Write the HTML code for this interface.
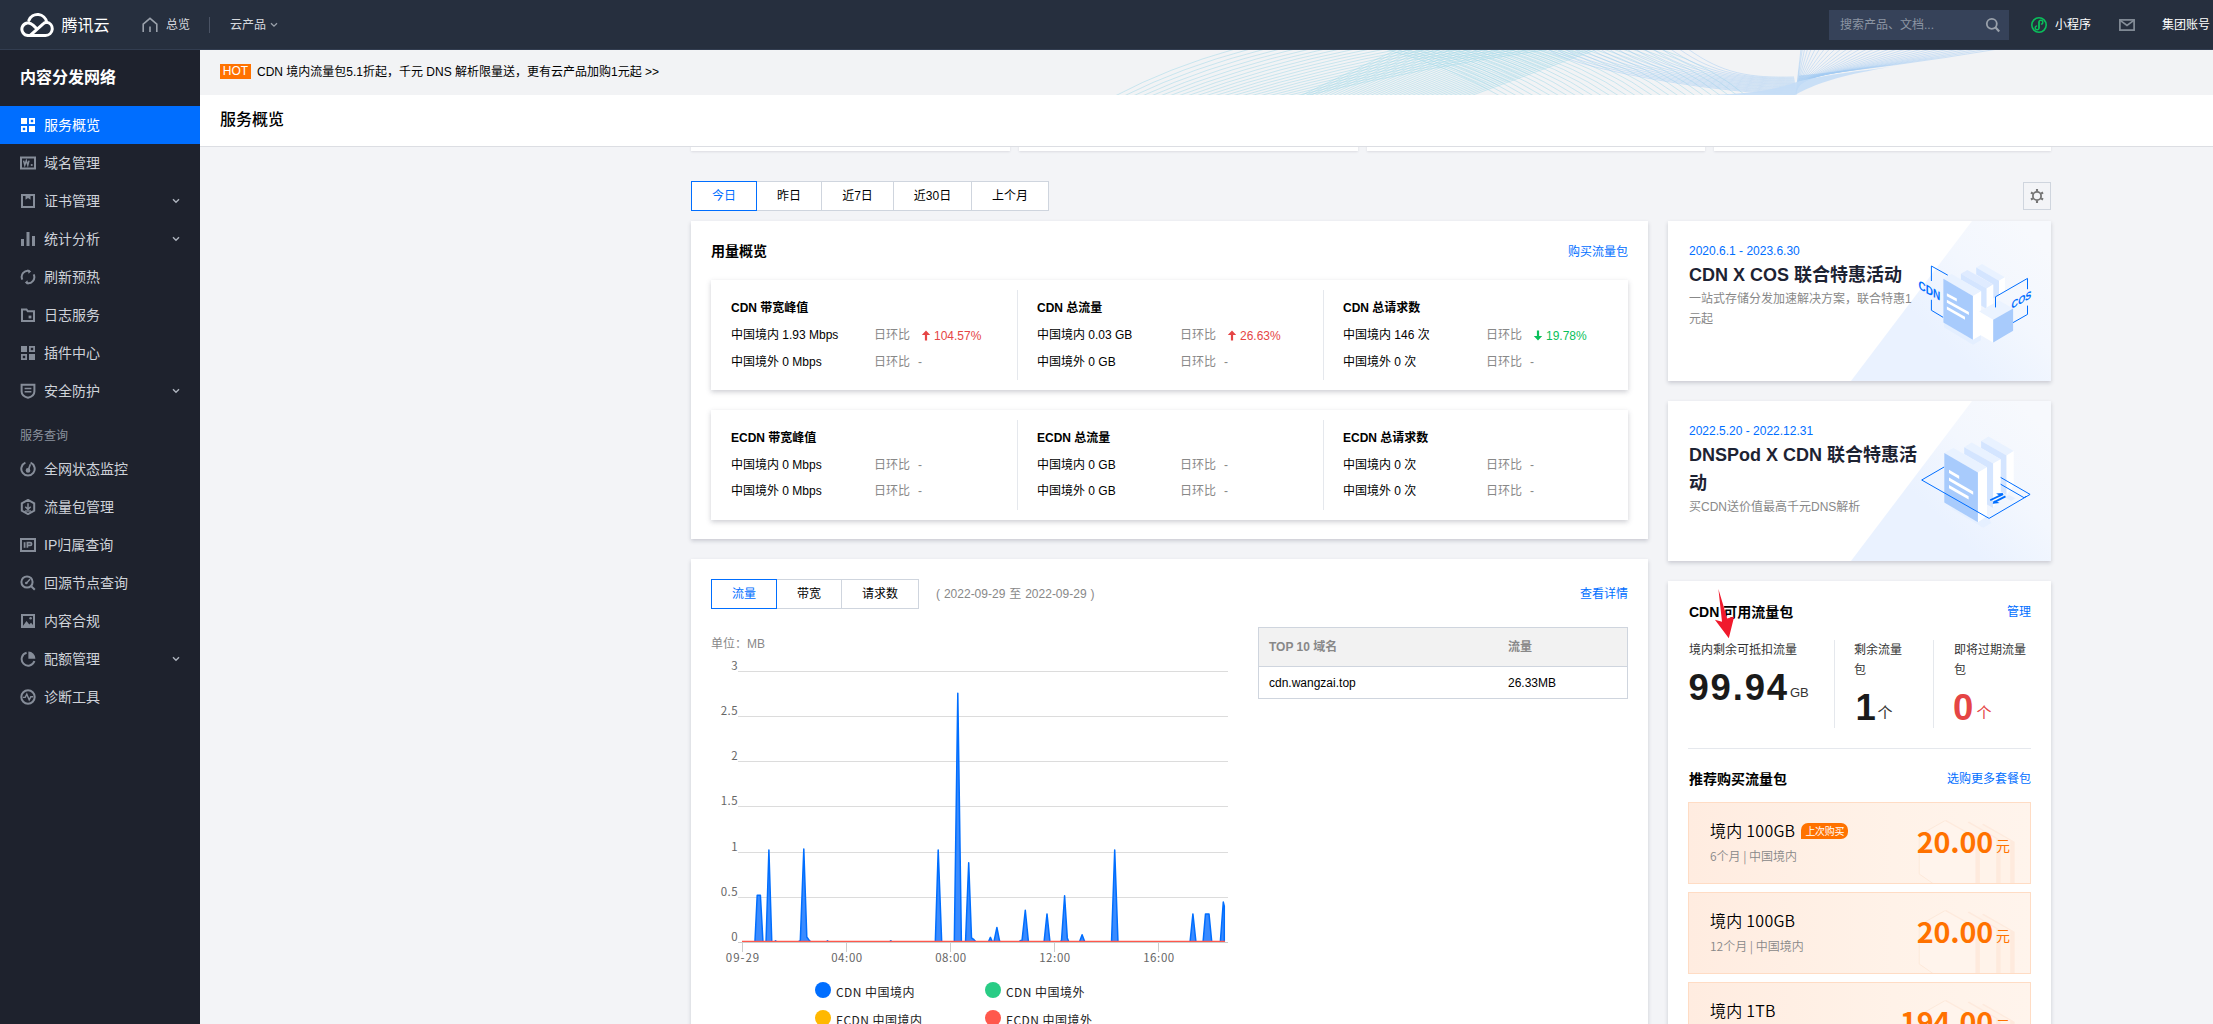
<!DOCTYPE html>
<html lang="zh-CN">
<head>
<meta charset="utf-8">
<title>内容分发网络 - 服务概览</title>
<style>
*{box-sizing:border-box;margin:0;padding:0}
html,body{width:2213px;height:1024px;overflow:hidden;background:#f3f4f7}
body{position:relative;font:12px/20px "Liberation Sans","Noto Sans CJK SC",sans-serif;color:#000}
.abs,.t{position:absolute}
.t{white-space:nowrap;line-height:20px;height:20px}
.b{font-weight:700}
.g{color:#888}
.blue{color:#006eff}
.ya{font-family:"Noto Sans CJK SC","Liberation Sans",sans-serif}
/* top bar */
#top{position:absolute;left:0;top:0;width:2213px;height:50px;background:#262f3e;border-bottom:1px solid #323d50}
#top .t{color:#d6d9de}
/* sidebar */
#side{position:absolute;left:0;top:50px;width:200px;height:974px;background:#1e222d}
#side .it{position:absolute;left:0;width:200px;height:38px;color:#cfd3da;font-size:14px;line-height:38px;padding-left:44px;white-space:nowrap}
#side .it.on{background:#006eff;color:#fff}
#side .it svg.ic{position:absolute;left:20px;top:11px;width:16px;height:16px}
#side .it svg.ch{position:absolute;left:172px;top:15px;width:8px;height:8px}
/* main */
#banner{position:absolute;left:200px;top:50px;width:2013px;height:45px;background:#f2f3f5;overflow:hidden}
#titlebar{z-index:4;position:absolute;left:200px;top:95px;width:2013px;height:52px;background:#fff;border-bottom:1px solid #dcdee3}
.card{position:absolute;background:#fff;box-shadow:0 2px 4px rgba(54,58,80,.22)}
.seg{position:absolute;height:30px;border:1px solid #cfd5de;background:#fff;text-align:center;line-height:28px;color:#000}
.seg.on{border-color:#006eff;color:#006eff;z-index:2}
.vd{position:absolute;width:1px;background:#e5e8ed}
</style>
</head>
<body>

<!-- ============ TOP BAR ============ -->
<div id="top">
  <svg class="abs" style="left:20px;top:12px" width="34" height="26" viewBox="0 0 34 26" fill="none" stroke="#fff" stroke-width="3" stroke-linecap="round" stroke-linejoin="round">
    <path d="M8.2 23.5h17.3a6.7 6.7 0 0 0 1.2-13.3A9.3 9.3 0 0 0 8.9 8.4"/>
    <path d="M8.2 23.5a6.3 6.3 0 1 1 4.6-10.6l3.1 2.9"/>
    <path d="M10.5 23.2L22.6 12.4a6 6 0 0 1 4.1-2.2"/>
  </svg>
  <div class="t ya" style="left:61.500px;top:13px;font-size:16px;line-height:22px;height:22px;color:#fff">腾讯云</div>
  <svg class="abs" style="left:142px;top:17px" width="16" height="16" viewBox="0 0 16 16" fill="none" stroke="#9aa1ab" stroke-width="1.6">
    <path d="M1.2 15V7.2L8 1.4l6.8 5.8V15"/><path d="M8 9.5V15"/>
  </svg>
  <div class="t" style="left:166px;top:15px">总览</div>
  <div class="abs" style="left:209px;top:17px;width:1px;height:16px;background:#4a5364"></div>
  <div class="t" style="left:230px;top:15px">云产品</div>
  <svg class="abs" style="left:270px;top:22px" width="8" height="6" viewBox="0 0 8 6" fill="none" stroke="#9aa1ab" stroke-width="1.3"><path d="M1 1.2l3 3 3-3"/></svg>

  <div class="abs" style="left:1829px;top:10px;width:180px;height:30px;background:#364259"></div>
  <div class="t" style="left:1840px;top:15px;color:#8c95a3">搜索产品、文档...</div>
  <svg class="abs" style="left:1985px;top:17px" width="16" height="16" viewBox="0 0 16 16" fill="none" stroke="#9aa1ab" stroke-width="1.8"><circle cx="6.8" cy="6.8" r="5"/><path d="M10.6 10.6l3.6 3.8" stroke-width="2.2"/></svg>
  <svg class="abs" style="left:2030px;top:16px" width="18" height="18" viewBox="0 0 18 18" fill="none" stroke="#0abf5b" stroke-width="1.6"><circle cx="9" cy="9" r="7.2"/><path d="M9 12.6V6.2a1.9 1.9 0 1 1 1.9 1.9" stroke-width="1.4"/><path d="M9 5.6v6.2a1.9 1.9 0 1 1-1.9-1.9" stroke-width="1.4"/></svg>
  <div class="t" style="left:2055px;top:15px;color:#fff">小程序</div>
  <svg class="abs" style="left:2119px;top:19px" width="16" height="12" viewBox="0 0 16 12" fill="none" stroke="#858e99" stroke-width="1.7"><rect x=".9" y=".9" width="14.2" height="10.2"/><path d="M1.200 1.400l6.800 5 6.800-5"/></svg>
  <div class="t" style="left:2162px;top:15px;color:#fff">集团账号</div>
</div>

<!-- ============ SIDEBAR ============ -->
<div id="side">
  <div class="t b ya" style="left:20px;top:14px;font-size:16px;line-height:24px;height:24px;color:#fff">内容分发网络</div>
  <div class="it on" style="top:56px"><svg class="ic" viewBox="0 0 16 16" fill="#fff" stroke="#fff" stroke-width="1.8"><rect x="1" y="1" width="6" height="6" stroke="none"/><rect x="9.9" y="1.9" width="4.2" height="4.2" fill="none"/><rect x="1.9" y="9.9" width="4.2" height="4.2" fill="none"/><rect x="9" y="9" width="6" height="6" stroke="none"/></svg>服务概览</div>
  <div class="it" style="top:94px"><svg class="ic" viewBox="0 0 16 16" fill="none" stroke="#868d99" stroke-width="2"><rect x="1" y="2.500" width="14" height="11"/><path d="M3.600 5.600l1.200 4.600 1.500-4.600 1.500 4.600L9 5.600" stroke-width="1.500"/><path d="M10.800 10h1.800" stroke-width="1.800"/></svg>域名管理</div>
  <div class="it" style="top:132px"><svg class="ic" viewBox="0 0 16 16" fill="none" stroke="#868d99" stroke-width="2"><rect x="2" y="2" width="12" height="12"/><path d="M5.500 2v4.800l2.500-1.700 2.500 1.700V2" fill="#868d99" stroke="none"/></svg>证书管理<svg class="ch" viewBox="0 0 8 8" fill="none" stroke="#aeb4be" stroke-width="1.4"><path d="M1 2.2l3 3 3-3"/></svg></div>
  <div class="it" style="top:170px"><svg class="ic" viewBox="0 0 16 16" fill="#868d99"><rect x="1" y="8" width="3" height="7"/><rect x="6.5" y="1" width="3" height="14"/><rect x="12" y="5" width="3" height="10"/></svg>统计分析<svg class="ch" viewBox="0 0 8 8" fill="none" stroke="#aeb4be" stroke-width="1.4"><path d="M1 2.2l3 3 3-3"/></svg></div>
  <div class="it" style="top:208px"><svg class="ic" viewBox="0 0 16 16" fill="none" stroke="#868d99" stroke-width="2"><path d="M2.3 10.6A6.2 6.2 0 0 1 9.6 2"/><path d="M13.7 5.4A6.2 6.2 0 0 1 6.4 14"/><path d="M7.6 0.6l3.6 1.6-2.6 2.6z" fill="#868d99" stroke="none"/><path d="M8.4 15.4l-3.6-1.6 2.6-2.6z" fill="#868d99" stroke="none"/></svg>刷新预热</div>
  <div class="it" style="top:246px"><svg class="ic" viewBox="0 0 16 16" fill="none" stroke="#868d99" stroke-width="2"><path d="M2 2.500h4.500l1.300 1.800h6.200v9.700H2z"/><rect x="8.6" y="8.6" width="2.8" height="2.8" fill="#868d99" stroke="none"/></svg>日志服务</div>
  <div class="it" style="top:284px"><svg class="ic" viewBox="0 0 16 16" fill="#868d99" stroke="#868d99" stroke-width="1.8"><rect x="1" y="1" width="6" height="6" stroke="none"/><rect x="9.9" y="1.9" width="4.2" height="4.2" fill="none"/><rect x="1.9" y="9.9" width="4.2" height="4.2" fill="none"/><rect x="9" y="9" width="6" height="6" stroke="none"/></svg>插件中心</div>
  <div class="it" style="top:322px"><svg class="ic" viewBox="0 0 16 16" fill="none" stroke="#868d99" stroke-width="2"><path d="M1.6 1.8h12.8v6.6c0 3.4-3 5.4-6.4 6.4-3.4-1-6.4-3-6.400-6.400z"/><path d="M4.600 5.600h6.800M4.600 8.800h6.800" stroke-width="1.5"/></svg>安全防护<svg class="ch" viewBox="0 0 8 8" fill="none" stroke="#aeb4be" stroke-width="1.4"><path d="M1 2.2l3 3 3-3"/></svg></div>
  <div class="it" style="top:400px"><svg class="ic" viewBox="0 0 16 16" fill="none" stroke="#868d99" stroke-width="2"><path d="M10.6 1.700A6.700 6.700 0 1 1 5.400 1.700"/><path d="M8 9.600L10.400 3.200" stroke-width="1.600"/><circle cx="8" cy="9.400" r="2.300" fill="#868d99" stroke="none"/></svg>全网状态监控</div>
  <div class="it" style="top:438px"><svg class="ic" viewBox="0 0 16 16" fill="none" stroke="#868d99" stroke-width="2"><path d="M8 .9l6.200 3.500v7.200L8 15.100 1.800 11.600V4.400z" stroke-dasharray="0"/><path d="M8 4.200v6M5.300 7.800L8 10.400l2.700-2.600" stroke-width="1.500"/><path d="M5 12h6" stroke-width="1.300"/></svg>流量包管理</div>
  <div class="it" style="top:476px"><svg class="ic" viewBox="0 0 16 16" fill="none" stroke="#868d99" stroke-width="2"><rect x="1" y="2" width="14" height="12"/><path d="M4.600 5.200v5.600" stroke-width="1.800"/><path d="M7.400 10.800V5.600h2.800a1.400 1.400 0 0 1 0 2.800H7.400" stroke-width="1.700"/></svg>IP归属查询</div>
  <div class="it" style="top:514px"><svg class="ic" viewBox="0 0 16 16" fill="none" stroke="#868d99" stroke-width="2"><circle cx="7" cy="7" r="5.600"/><path d="M11.200 11.200l3.600 3.600" stroke-width="2"/><path d="M6.500 8L10 4.200" stroke-width="1.500"/><circle cx="6.300" cy="8" r="1.300" fill="#868d99" stroke="none"/></svg>回源节点查询</div>
  <div class="it" style="top:552px"><svg class="ic" viewBox="0 0 16 16" fill="none" stroke="#868d99" stroke-width="2"><rect x="2" y="2" width="12" height="12"/><path d="M2.500 13.500l4-5.500 2.800 3.400 1.700-1.700 2.500 2.800v1z" fill="#868d99" stroke="none"/><circle cx="10.600" cy="5.200" r="1.300" fill="#868d99" stroke="none"/></svg>内容合规</div>
  <div class="it" style="top:590px"><svg class="ic" viewBox="0 0 16 16" fill="none" stroke="#868d99" stroke-width="2"><path d="M6.600 1.800A6.500 6.500 0 1 0 14.400 10"/><path d="M8.400 .6a7 7 0 0 1 7 7.200H8.400z" fill="#868d99" stroke="none"/></svg>配额管理<svg class="ch" viewBox="0 0 8 8" fill="none" stroke="#aeb4be" stroke-width="1.4"><path d="M1 2.2l3 3 3-3"/></svg></div>
  <div class="it" style="top:628px"><svg class="ic" viewBox="0 0 16 16" fill="none" stroke="#868d99" stroke-width="2"><circle cx="8" cy="8" r="6.700"/><path d="M2.800 8.400h2.400l1.600-3.200 2.400 5.600 1.600-3h2.400" stroke-width="1.400"/></svg>诊断工具</div>
  <div class="t" style="left:20px;top:376px;color:#8b929e">服务查询</div>
</div>

<!-- ============ BANNER + TITLE ============ -->
<div id="banner">
<svg class="abs" style="left:0;top:0" width="2013" height="45" viewBox="0 0 2013 45" fill="none"><path d="M915.0 46Q969.0 17.5 1035.0 -1M924.0 46Q981.0 17.5 1050.0 -1M933.0 46Q993.0 17.5 1065.0 -1M942.0 46Q1005.0 17.5 1080.0 -1M951.0 46Q1017.0 17.5 1095.0 -1M960.0 46Q1029.0 17.5 1110.0 -1M969.0 46Q1041.0 17.5 1125.0 -1M978.0 46Q1053.0 17.5 1140.0 -1M987.0 46Q1065.0 17.5 1155.0 -1M996.0 46Q1077.0 17.5 1170.0 -1M1005.0 46Q1089.0 17.5 1185.0 -1M1014.0 46Q1101.0 17.5 1200.0 -1M1023.0 46Q1113.0 17.5 1215.0 -1M1032.0 46Q1125.0 17.5 1230.0 -1M1041.0 46Q1137.0 17.5 1245.0 -1M1050.0 46Q1149.0 17.5 1260.0 -1M1059.0 46Q1161.0 17.5 1275.0 -1M1068.0 46Q1173.0 17.5 1290.0 -1M1077.0 46Q1185.0 17.5 1305.0 -1M1086.0 46Q1197.0 17.5 1320.0 -1M1095.0 46Q1209.0 17.5 1335.0 -1M1104.0 46Q1221.0 17.5 1350.0 -1M1100.0 46L1198.0 -1M1104.6 46L1203.4 -1M1109.2 46L1208.8 -1M1113.8 46L1214.2 -1M1118.4 46L1219.6 -1M1123.0 46L1225.0 -1M1127.6 46L1230.4 -1M1132.2 46L1235.8 -1M1136.8 46L1241.2 -1M1141.4 46L1246.6 -1M1146.0 46L1252.0 -1M1150.6 46L1257.4 -1M1155.2 46L1262.8 -1M1159.8 46L1268.2 -1M1164.4 46L1273.6 -1M1169.0 46L1279.0 -1M1173.6 46L1284.4 -1M1178.2 46L1289.8 -1M1182.8 46L1295.2 -1M1187.4 46L1300.6 -1M1192.0 46L1306.0 -1M1196.6 46L1311.4 -1M1201.2 46L1316.8 -1M1205.8 46L1322.2 -1M1210.4 46L1327.6 -1M1215.0 46L1333.0 -1M1219.6 46L1338.4 -1M1224.2 46L1343.8 -1M1228.8 46L1349.2 -1M1233.4 46L1354.6 -1M1238.0 46L1360.0 -1M1242.6 46L1365.4 -1M1247.2 46L1370.8 -1M1251.8 46L1376.2 -1M1256.4 46L1381.6 -1M1261.0 46L1387.0 -1M1265.6 46L1392.4 -1M1270.2 46L1397.8 -1M1185.0 -1Q1250.5 16.5 1300.0 46M1194.5 -1Q1259.5 16.5 1308.5 46M1204.0 -1Q1268.5 16.5 1317.0 46M1213.5 -1Q1277.5 16.5 1325.5 46M1223.0 -1Q1286.5 16.5 1334.0 46M1232.5 -1Q1295.5 16.5 1342.5 46M1242.0 -1Q1304.5 16.5 1351.0 46M1251.5 -1Q1313.5 16.5 1359.5 46M1261.0 -1Q1322.5 16.5 1368.0 46M1270.5 -1Q1331.5 16.5 1376.5 46M1280.0 -1Q1340.5 16.5 1385.0 46M1289.5 -1Q1349.5 16.5 1393.5 46M1299.0 -1Q1358.5 16.5 1402.0 46M1308.5 -1Q1367.5 16.5 1410.5 46M1318.0 -1Q1376.5 16.5 1419.0 46M1327.5 -1Q1385.5 16.5 1427.5 46M1337.0 -1Q1394.5 16.5 1436.0 46M1346.5 -1Q1403.5 16.5 1444.5 46M1356.0 -1Q1412.5 16.5 1453.0 46M1365.5 -1Q1421.5 16.5 1461.5 46M1375.0 -1Q1430.5 16.5 1470.0 46M1384.5 -1Q1439.5 16.5 1478.5 46M1394.0 -1Q1448.5 16.5 1487.0 46M1403.5 -1Q1457.5 16.5 1495.5 46M1413.0 -1Q1466.5 16.5 1504.0 46M1422.5 -1Q1475.5 16.5 1512.5 46M1432.0 -1Q1484.5 16.5 1521.0 46M1441.5 -1Q1493.5 16.5 1529.5 46M1451.0 -1Q1502.5 16.5 1538.0 46M1460.5 -1Q1511.5 16.5 1546.5 46" stroke="#a3d9e8" stroke-width=".6" opacity=".9"/><path d="M1348.0 -1C1373.0 20.0 1530.0 45.0 1597.0 44.0M1356.8 -1C1382.4 20.2 1531.2 43.9 1596.8 42.9M1365.5 -1C1391.8 20.5 1532.5 42.9 1596.6 41.9M1374.2 -1C1401.1 20.8 1533.8 41.8 1596.4 40.8M1383.0 -1C1410.5 21.0 1535.0 40.8 1596.2 39.8M1391.8 -1C1419.9 21.2 1536.2 39.7 1596.1 38.7M1400.5 -1C1429.2 21.5 1537.5 38.6 1595.9 37.6M1409.2 -1C1438.6 21.8 1538.8 37.6 1595.7 36.6M1418.0 -1C1448.0 22.0 1540.0 36.5 1595.5 35.5M1426.8 -1C1457.4 22.2 1541.2 35.4 1595.3 34.4M1435.5 -1C1466.8 22.5 1542.5 34.4 1595.1 33.4M1444.2 -1C1476.1 22.8 1543.8 33.3 1594.9 32.3M1453.0 -1C1485.5 23.0 1545.0 32.2 1594.8 31.2M1461.8 -1C1494.9 23.2 1546.2 31.2 1594.6 30.2M1470.5 -1C1504.2 23.5 1547.5 30.1 1594.4 29.1M1479.2 -1C1513.6 23.8 1548.8 29.1 1594.2 28.1M1488.0 -1C1523.0 24.0 1550.0 28.0 1594.0 27.0M1596.0 44.0Q1598.5 21.5 1601.0 -1M1596.1 43.4Q1598.8 21.4 1602.3 -1M1596.2 42.8Q1599.7 21.2 1604.6 -1M1596.3 42.1Q1600.9 21.1 1607.6 -1M1596.4 41.5Q1602.4 20.9 1611.1 -1M1596.5 40.9Q1604.1 20.8 1615.1 -1M1596.6 40.3Q1606.0 20.7 1619.5 -1M1596.7 39.7Q1608.1 20.5 1624.4 -1M1596.8 39.0Q1610.4 20.4 1629.5 -1M1596.9 38.4Q1612.9 20.3 1635.1 -1M1597.0 37.8Q1615.5 20.1 1640.9 -1M1597.1 37.2Q1618.3 20.0 1647.0 -1M1597.2 36.6Q1621.2 19.8 1653.4 -1M1597.3 35.9Q1624.3 19.7 1660.1 -1M1597.4 35.3Q1627.4 19.6 1667.1 -1M1597.6 34.7Q1630.7 19.4 1674.3 -1M1597.7 34.1Q1634.2 19.3 1681.7 -1M1597.8 33.4Q1637.7 19.2 1689.4 -1M1597.9 32.8Q1641.4 19.0 1697.3 -1M1598.0 32.2Q1645.2 18.9 1705.5 -1M1598.1 31.6Q1649.1 18.7 1713.8 -1M1598.2 31.0Q1653.0 18.6 1722.4 -1M1598.3 30.3Q1657.1 18.5 1731.2 -1M1598.4 29.7Q1661.3 18.3 1740.1 -1M1598.5 29.1Q1665.6 18.2 1749.3 -1M1598.6 28.5Q1670.0 18.1 1758.7 -1M1598.7 27.9Q1674.5 17.9 1768.2 -1M1598.8 27.2Q1679.1 17.8 1778.0 -1M1598.9 26.6Q1683.7 17.6 1787.9 -1M1599.0 26.0Q1688.5 17.5 1798.0 -1" stroke="#a3cbf2" stroke-width=".6" opacity=".8"/><path d="M1512 45C1550 44 1575 40 1600 31C1630 24 1660 21 1690 17C1650 24 1622 30 1595 45z" fill="#c4ddf6" opacity=".9"/></svg>
  <div class="abs" style="left:20px;top:14px;width:31px;height:15px;background:#ff7200;color:#fff;font-size:12px;line-height:15px;text-align:center">HOT</div>
  <div class="t" style="left:57px;top:12px;color:#000">CDN 境内流量包5.1折起，千元 DNS 解析限量送，更有云产品加购1元起 &gt;&gt;</div>
</div>
<div id="titlebar">
  <div class="t ya" style="left:20px;top:11px;font-size:16px;font-weight:500;line-height:24px;height:24px">服务概览</div>
</div>

<div class="card" style="left:691px;top:140px;width:319px;height:11px;box-shadow:0 1px 2px rgba(54,58,80,.12)"></div>
<div class="card" style="left:1019px;top:140px;width:339px;height:11px;box-shadow:0 1px 2px rgba(54,58,80,.12)"></div>
<div class="card" style="left:1367px;top:140px;width:338px;height:11px;box-shadow:0 1px 2px rgba(54,58,80,.12)"></div>
<div class="card" style="left:1714px;top:140px;width:337px;height:11px;box-shadow:0 1px 2px rgba(54,58,80,.12)"></div>
<div class="seg on" style="left:691px;top:181px;width:66px">今日</div>
<div class="seg" style="left:756px;top:181px;width:66px">昨日</div>
<div class="seg" style="left:821px;top:181px;width:73px">近7日</div>
<div class="seg" style="left:893px;top:181px;width:79px">近30日</div>
<div class="seg" style="left:971px;top:181px;width:78px">上个月</div>
<div class="seg" style="left:2023px;top:182px;width:28px;height:28px;background:transparent"></div>
<svg class="abs" style="left:2029px;top:188px;z-index:3" width="16" height="16" viewBox="0 0 16 16" fill="none" stroke="#757575"><circle cx="8" cy="8" r="4.100" stroke-width="1.800"/><path d="M8.00 3.40L8.00 1.00M11.98 5.70L14.06 4.50M11.98 10.30L14.06 11.50M8.00 12.60L8.00 15.00M4.02 10.30L1.94 11.50M4.02 5.70L1.94 4.50" stroke-width="2.100"/></svg>
<div class="card" style="left:691px;top:221px;width:957px;height:318px"></div>
<div class="t b" style="left:711px;top:241px;font-size:14px">用量概览</div>
<div class="t blue" style="right:585px;top:242px;">购买流量包</div>
<div class="card" style="left:711px;top:280px;width:917px;height:110px;box-shadow:0 2px 5px rgba(54,58,80,.25)"></div>
<div class="vd" style="left:1017px;top:290px;height:90px"></div>
<div class="vd" style="left:1323px;top:290px;height:90px"></div>
<div class="t b" style="left:731px;top:297.5px;">CDN 带宽峰值</div>
<div class="t " style="left:731px;top:325px;">中国境内 1.93 Mbps</div>
<div class="t " style="left:731px;top:351.5px;">中国境外 0 Mbps</div>
<div class="t g" style="left:874px;top:325px;">日环比</div>
<div class="t g" style="left:874px;top:351.5px;">日环比</div>
<div class="t " style="left:921px;top:325.7px;color:#e54545"><svg width="10" height="11" viewBox="0 0 10 11" style="vertical-align:-1px;margin-right:3px"><path d="M5 .5L.8 5h3.100v5.500h2.200V5h3.100z" fill="#e54545"/></svg>104.57%</div>
<div class="t g" style="left:918px;top:351.5px;">-</div>
<div class="t b" style="left:1037px;top:297.5px;">CDN 总流量</div>
<div class="t " style="left:1037px;top:325px;">中国境内 0.03 GB</div>
<div class="t " style="left:1037px;top:351.5px;">中国境外 0 GB</div>
<div class="t g" style="left:1180px;top:325px;">日环比</div>
<div class="t g" style="left:1180px;top:351.5px;">日环比</div>
<div class="t " style="left:1227px;top:325.7px;color:#e54545"><svg width="10" height="11" viewBox="0 0 10 11" style="vertical-align:-1px;margin-right:3px"><path d="M5 .5L.8 5h3.100v5.500h2.200V5h3.100z" fill="#e54545"/></svg>26.63%</div>
<div class="t g" style="left:1224px;top:351.5px;">-</div>
<div class="t b" style="left:1343px;top:297.5px;">CDN 总请求数</div>
<div class="t " style="left:1343px;top:325px;">中国境内 146 次</div>
<div class="t " style="left:1343px;top:351.5px;">中国境外 0 次</div>
<div class="t g" style="left:1486px;top:325px;">日环比</div>
<div class="t g" style="left:1486px;top:351.5px;">日环比</div>
<div class="t " style="left:1533px;top:325.7px;color:#0abf5b"><svg width="10" height="11" viewBox="0 0 10 11" style="vertical-align:-1px;margin-right:3px"><path d="M5 10.500L.8 6h3.100V.5h2.200V6h3.100z" fill="#0abf5b"/></svg>19.78%</div>
<div class="t g" style="left:1530px;top:351.5px;">-</div>
<div class="card" style="left:711px;top:410px;width:917px;height:110px;box-shadow:0 2px 5px rgba(54,58,80,.25)"></div>
<div class="vd" style="left:1017px;top:420px;height:90px"></div>
<div class="vd" style="left:1323px;top:420px;height:90px"></div>
<div class="t b" style="left:731px;top:427.5px;">ECDN 带宽峰值</div>
<div class="t " style="left:731px;top:455px;">中国境内 0 Mbps</div>
<div class="t " style="left:731px;top:481px;">中国境外 0 Mbps</div>
<div class="t g" style="left:874px;top:455px;">日环比</div>
<div class="t g" style="left:874px;top:481px;">日环比</div>
<div class="t g" style="left:918px;top:455px;">-</div>
<div class="t g" style="left:918px;top:481px;">-</div>
<div class="t b" style="left:1037px;top:427.5px;">ECDN 总流量</div>
<div class="t " style="left:1037px;top:455px;">中国境内 0 GB</div>
<div class="t " style="left:1037px;top:481px;">中国境外 0 GB</div>
<div class="t g" style="left:1180px;top:455px;">日环比</div>
<div class="t g" style="left:1180px;top:481px;">日环比</div>
<div class="t g" style="left:1224px;top:455px;">-</div>
<div class="t g" style="left:1224px;top:481px;">-</div>
<div class="t b" style="left:1343px;top:427.5px;">ECDN 总请求数</div>
<div class="t " style="left:1343px;top:455px;">中国境内 0 次</div>
<div class="t " style="left:1343px;top:481px;">中国境外 0 次</div>
<div class="t g" style="left:1486px;top:455px;">日环比</div>
<div class="t g" style="left:1486px;top:481px;">日环比</div>
<div class="t g" style="left:1530px;top:455px;">-</div>
<div class="t g" style="left:1530px;top:481px;">-</div>
<div class="card" style="left:691px;top:559px;width:957px;height:480px"></div>
<div class="seg on" style="left:711px;top:579px;width:66px">流量</div>
<div class="seg" style="left:776px;top:579px;width:66px">带宽</div>
<div class="seg" style="left:841px;top:579px;width:78px">请求数</div>
<div class="t g" style="left:936px;top:583.5px;word-spacing:.6px">( 2022-09-29 至 2022-09-29 )</div>
<div class="t blue" style="right:585px;top:583.5px;">查看详情</div>
<div class="t g" style="left:711px;top:634px;">单位：MB</div>
<div class="abs" style="left:1258px;top:627px;width:370px;height:72px;border:1px solid #cfd5de;background:#fff"></div>
<div class="abs" style="left:1259px;top:628px;width:368px;height:39px;background:#f2f2f2;border-bottom:1px solid #cfd5de"></div>
<div class="t b g" style="left:1269px;top:636.5px;">TOP 10 域名</div>
<div class="t b g" style="left:1508px;top:636.5px;">流量</div>
<div class="t " style="left:1269px;top:672.5px;">cdn.wangzai.top</div>
<div class="t " style="left:1508px;top:672.5px;">26.33MB</div>
<svg class="abs" style="left:700px;top:655px" width="560" height="369" viewBox="700 655 560 369" font-family="Noto Sans CJK SC, Liberation Sans, sans-serif">
<path d="M738 942.5H1228" stroke="#ccc" stroke-width="1"/>
<text x="738" y="941.0" text-anchor="end" font-size="11.500" fill="#666" letter-spacing=".4">0</text>
<path d="M738 897.5H1228" stroke="#dcdcdc" stroke-width="1"/>
<text x="738" y="896.0" text-anchor="end" font-size="11.500" fill="#666" letter-spacing=".4">0.5</text>
<path d="M738 852.5H1228" stroke="#dcdcdc" stroke-width="1"/>
<text x="738" y="851.0" text-anchor="end" font-size="11.500" fill="#666" letter-spacing=".4">1</text>
<path d="M738 806.5H1228" stroke="#dcdcdc" stroke-width="1"/>
<text x="738" y="805.0" text-anchor="end" font-size="11.500" fill="#666" letter-spacing=".4">1.5</text>
<path d="M738 761.5H1228" stroke="#dcdcdc" stroke-width="1"/>
<text x="738" y="760.0" text-anchor="end" font-size="11.500" fill="#666" letter-spacing=".4">2</text>
<path d="M738 716.5H1228" stroke="#dcdcdc" stroke-width="1"/>
<text x="738" y="715.0" text-anchor="end" font-size="11.500" fill="#666" letter-spacing=".4">2.5</text>
<path d="M738 671.5H1228" stroke="#dcdcdc" stroke-width="1"/>
<text x="738" y="670.0" text-anchor="end" font-size="11.500" fill="#666" letter-spacing=".4">3</text>
<path d="M742.5 942V952" stroke="#ccc" stroke-width="1"/>
<text x="743.0" y="961.600" text-anchor="middle" font-size="11.500" fill="#666" letter-spacing="0.95">09-29</text>
<path d="M846.5 942V952" stroke="#ccc" stroke-width="1"/>
<text x="847.0" y="961.600" text-anchor="middle" font-size="11.500" fill="#666" letter-spacing="0.6">04:00</text>
<path d="M950.5 942V952" stroke="#ccc" stroke-width="1"/>
<text x="951.0" y="961.600" text-anchor="middle" font-size="11.500" fill="#666" letter-spacing="0.6">08:00</text>
<path d="M1054.5 942V952" stroke="#ccc" stroke-width="1"/>
<text x="1055.0" y="961.600" text-anchor="middle" font-size="11.500" fill="#666" letter-spacing="0.6">12:00</text>
<path d="M1158.5 942V952" stroke="#ccc" stroke-width="1"/>
<text x="1159.0" y="961.600" text-anchor="middle" font-size="11.500" fill="#666" letter-spacing="0.6">16:00</text>
<clipPath id="cp"><rect x="738" y="660" width="492" height="281.800"/></clipPath>
<g clip-path="url(#cp)"><path d="M754.9 942.4 L757.2 895.3 L760.4 895.3 L763 942.4Z M766 942.4 L768.9 850.0 L771.8 942.4Z M774 942.4 L775.6 940.8 L777 942.4Z M797 942.4 L800.3 940.6 L803.8 849.1 L806.8 937.0 L809.5 940.6 L811 942.4Z M826 942.4 L827.5 940.8 L829 942.4Z M889 942.4 L890.8 940.8 L892.5 942.4Z M935.3 942.4 L938.2 850.0 L941.7 942.4Z M954.3 942.4 L957.8 693.2 L961.4 942.4Z M965.5 942.4 L968.7 862.7 L971.5 937.9 L974 939.7 L976.5 942.4Z M988.2 942.4 L990.4 937.4 L992.6 942.4Z M993.8 942.4 L996.9 927.5 L999.5 940.6 L1000.5 942.4Z M1018.5 942.4 L1020.5 940.6 L1022 940.6 L1025.3 910.2 L1028.5 942.4Z M1044 942.4 L1047 913.9 L1050 942.4Z M1059.5 942.4 L1061.5 940.6 L1064.6 895.7 L1067.3 937.9 L1069 942.4Z M1079.3 942.4 L1082.1 934.7 L1085 942.4Z M1111.5 942.4 L1114.7 850.0 L1118 942.4Z M1190 942.4 L1192.9 913.9 L1196 942.4Z M1203 942.4 L1205.5 913.9 L1209 913.9 L1211.8 942.4Z M1220.3 942.4 L1223.3 902.1 L1224.3 906.2 L1224.3 942.4Z " fill="#3a8bff"/><path d="M754.9 942.4 L757.2 895.3 L760.4 895.3 L763 942.4 M766 942.4 L768.9 850.0 L771.8 942.4 M774 942.4 L775.6 940.8 L777 942.4 M797 942.4 L800.3 940.6 L803.8 849.1 L806.8 937.0 L809.5 940.6 L811 942.4 M826 942.4 L827.5 940.8 L829 942.4 M889 942.4 L890.8 940.8 L892.5 942.4 M935.3 942.4 L938.2 850.0 L941.7 942.4 M954.3 942.4 L957.8 693.2 L961.4 942.4 M965.5 942.4 L968.7 862.7 L971.5 937.9 L974 939.7 L976.5 942.4 M988.2 942.4 L990.4 937.4 L992.6 942.4 M993.8 942.4 L996.9 927.5 L999.5 940.6 L1000.5 942.4 M1018.5 942.4 L1020.5 940.6 L1022 940.6 L1025.3 910.2 L1028.5 942.4 M1044 942.4 L1047 913.9 L1050 942.4 M1059.5 942.4 L1061.5 940.6 L1064.6 895.7 L1067.3 937.9 L1069 942.4 M1079.3 942.4 L1082.1 934.7 L1085 942.4 M1111.5 942.4 L1114.7 850.0 L1118 942.4 M1190 942.4 L1192.9 913.9 L1196 942.4 M1203 942.4 L1205.5 913.9 L1209 913.9 L1211.8 942.4 M1220.3 942.4 L1223.3 902.1 L1224.3 906.2 L1224.3 942.4 " fill="none" stroke="#006eff" stroke-width="1.500" stroke-linejoin="round"/></g>
<path d="M742 941.3H1225" stroke="#ff584c" stroke-width="1.200"/>
<circle cx="823" cy="990" r="8" fill="#006eff"/>
<text x="836" y="996.5" font-size="12" fill="#222" letter-spacing=".45">CDN 中国境内</text>
<circle cx="993" cy="990" r="8" fill="#29cc85"/>
<text x="1006" y="996.5" font-size="12" fill="#222" letter-spacing=".45">CDN 中国境外</text>
<circle cx="823" cy="1018" r="8" fill="#ffb800"/>
<text x="836" y="1024.5" font-size="12" fill="#222" letter-spacing=".45">ECDN 中国境内</text>
<circle cx="993" cy="1018" r="8" fill="#ff584c"/>
<text x="1006" y="1024.5" font-size="12" fill="#222" letter-spacing=".45">ECDN 中国境外</text>
</svg>

<div class="card" style="left:1668px;top:221px;width:383px;height:160px;overflow:hidden"><svg class="abs" style="left:0;top:0" width="383" height="160" viewBox="0 0 383 160"><defs><linearGradient id="pg221" x1="0" y1="1" x2="1" y2="0.2"><stop offset="0.4" stop-color="#eaf2ff"/><stop offset="0.7" stop-color="#f3f7fe"/><stop offset="1" stop-color="#f7f9fd"/></linearGradient></defs><path d="M304 0H383V160H183z" fill="url(#pg221)"/><path d="M275.9 106.3L304.9 123.7L312.9 119.2L312.9 112.8L304.9 118.8L275.9 101.6z" fill="#e4efff" /><path d="M308.2 46.5L314.0 43.0L336.9 56.3L331.0 59.8z" fill="#e9f2ff" /><path d="M308.2 46.5L331.0 59.8L331.0 74.1L325.2 77.6L325.2 63.5L308.2 53.6z" fill="#d4e5ff" /><path d="M331.0 59.8L336.9 56.3L336.9 70.6L331.0 74.1z" fill="#fff" /><path d="M292.9 52.8L299.4 48.9L325.2 63.5L318.7 67.4z" fill="#dfebff" /><path d="M292.9 52.8L318.7 67.4L318.7 88.1L313.1 84.6L313.1 70.3L292.9 58.8z" fill="#d4e5ff" /><path d="M318.7 67.4L325.2 63.5L325.2 82.9L318.7 88.1z" fill="#fff" /><path d="M275.4 57.7L283.6 53.0L313.1 70.3L304.9 75.0z" fill="#e9f2ff" /><path d="M304.9 75.0L313.1 70.3L313.1 113.9L304.9 118.8z" fill="#fff" /><path d="M275.4 57.7L304.9 75.0L304.9 118.8L275.4 101.6z" fill="#a8cbfc" /><path d="M278.9 72.3L288.8 77.6L288.8 80.5L278.9 75.3z" fill="#fff" /><path d="M278.9 78.8L300.9 91.1L300.9 94.0L278.9 81.7z" fill="#fff" /><path d="M278.9 85.6L297.0 95.8L297.0 98.7L278.9 88.5z" fill="#fff" /><path d="M311.1 90.5L331.0 79.4L345.1 87.6L325.2 98.7z" fill="#ebf3ff" /><path d="M311.1 90.5L325.2 98.7L325.2 121.5L311.1 113.3z" fill="#fff" /><path d="M325.2 98.7L345.1 87.6L345.1 109.8L325.2 121.5z" fill="#a8cbfc" /><path d="M279.8 54.2L263.4 45.0L263.4 60.0" fill="none" stroke="#006eff" stroke-width="1"/><path d="M263.4 78.8L263.4 89.3L275.1 96.3" fill="none" stroke="#006eff" stroke-width="1"/><path d="M327.5 86.4L327.5 75.8L359.5 57.4L359.5 68.2" fill="none" stroke="#006eff" stroke-width="1"/><path d="M359.5 84.6L359.5 93.4L345.1 101.6" fill="none" stroke="#006eff" stroke-width="1"/><text font-family="Liberation Sans,sans-serif" font-size="12.500" font-weight="700" fill="#006eff" transform="matrix(.8 .46 0 1 250.500 67.500)">CDN</text><text font-family="Liberation Sans,sans-serif" font-size="11.500" font-weight="700" fill="#006eff" transform="matrix(.8 -.46 -.12 1 343 88.300)">COS</text></svg><div class="abs blue" style="left:21px;top:20px;line-height:20px;white-space:nowrap">2020.6.1 - 2023.6.30</div><div class="abs b" style="left:21px;top:40px;width:232px;font-size:18px;line-height:28px;color:#1d2333;font-family:'Liberation Sans','Noto Sans CJK SC',sans-serif">CDN X COS 联合特惠活动</div></div>
<div class="abs g" style="left:1689px;top:289px;width:228px;line-height:20px">一站式存储分发加速解决方案，联合特惠1元起</div>
<div class="card" style="left:1668px;top:401px;width:383px;height:160px;overflow:hidden"><svg class="abs" style="left:0;top:0" width="383" height="160" viewBox="0 0 383 160"><defs><linearGradient id="pg401" x1="0" y1="1" x2="1" y2="0.2"><stop offset="0.4" stop-color="#eaf2ff"/><stop offset="0.7" stop-color="#f3f7fe"/><stop offset="1" stop-color="#f7f9fd"/></linearGradient></defs><path d="M304 0H383V160H183z" fill="url(#pg401)"/><path d="M283.6 108.1L315.2 126.8L323.4 122.1L319.0 115.1L309.9 121.2L283.6 106.0z" fill="#e6f0ff" /><path d="M313.1 40.1L320.5 35.6L345.7 50.1L338.6 54.4z" fill="#e9f2ff" /><path d="M313.1 40.1L338.6 54.4L338.6 94.0L332.6 90.5L332.6 58.3L313.1 47.1z" fill="#d4e5ff" /><path d="M338.6 54.4L345.7 50.1L345.7 84.6L338.6 94.0z" fill="#fff" /><path d="M253.7 79.0L276.3 65.9" fill="none" stroke="#006eff" stroke-width="1"/><path d="M328.1 73.8L362.1 93.4L321.1 117.4" fill="none" stroke="#006eff" stroke-width="1"/><path d="M328.1 80.6L356.0 96.7L358.0 95.5" fill="none" stroke="#006eff" stroke-width="1"/><path d="M341.0 94.0L347.4 97.3L343.3 99.9L336.9 96.6z" fill="#e4eeff" /><path d="M296.2 46.2L303.7 41.6L332.6 58.3L325.2 62.6z" fill="#e9f2ff" /><path d="M296.2 46.2L325.2 62.6L325.2 106.9L319.0 103.4L319.0 66.3L296.2 53.0z" fill="#d4e5ff" /><path d="M325.2 62.6L332.6 58.3L332.6 94.0L325.2 106.9z" fill="#fff" /><path d="M276.3 52.0L285.3 46.9L319.0 66.3L309.9 71.5z" fill="#e9f2ff" /><path d="M309.9 71.5L319.0 66.3L319.0 115.1L309.9 121.2z" fill="#fff" /><path d="M276.3 52.0L309.9 71.5L309.9 121.2L276.3 101.6z" fill="#a8cbfc" /><path d="M281.0 68.8L291.2 74.7L291.2 77.9L281.0 72.1z" fill="#fff" /><path d="M281.0 76.4L305.2 90.5L305.2 93.8L281.0 79.7z" fill="#fff" /><path d="M281.0 84.0L300.6 95.2L300.6 98.5L281.0 87.3z" fill="#fff" /><path d="M253.7 79.0L321.1 117.4" fill="none" stroke="#006eff" stroke-width="1"/><path d="M322.2 99.3L335.1 93.1" fill="none" stroke="#006eff" stroke-width="1.8"/><path d="M325.2 101.6L337.5 95.4" fill="none" stroke="#006eff" stroke-width="1.8"/><path d="M328.1 92.6L335.1 91.9L332.8 95.2z" fill="#006eff" /><path d="M331.6 102.0L324.6 102.7L326.7 99.4z" fill="#006eff" /></svg><div class="abs blue" style="left:21px;top:20px;line-height:20px;white-space:nowrap">2022.5.20 - 2022.12.31</div><div class="abs b" style="left:21px;top:40px;width:232px;font-size:18px;line-height:28px;color:#1d2333;font-family:'Liberation Sans','Noto Sans CJK SC',sans-serif">DNSPod X CDN 联合特惠活动</div></div>
<div class="t g" style="left:1689px;top:496.5px;">买CDN送价值最高千元DNS解析</div>
<div class="card" style="left:1668px;top:581px;width:383px;height:460px"></div>
<div class="t b" style="left:1689px;top:601.5px;font-size:14px">CDN 可用流量包</div>
<div class="t blue" style="right:182px;top:601.5px;">管理</div>
<div class="t " style="left:1689px;top:639.5px;color:#333">境内剩余可抵扣流量</div>
<div class="abs" style="left:1854px;top:640px;width:56px;line-height:20px;color:#333">剩余流量包</div>
<div class="abs" style="left:1954px;top:640px;width:76px;line-height:20px;color:#333">即将过期流量包</div>
<div class="vd" style="left:1834px;top:640px;height:88px"></div><div class="vd" style="left:1933px;top:640px;height:88px"></div>
<div class="t" style="left:1688.500px;top:667.500px;font-family:'Liberation Sans','Noto Sans CJK SC',sans-serif;font-weight:700;font-size:36.5px;line-height:40px;height:40px;letter-spacing:1.8px;color:#1a1a1a">99.94</div>
<div class="t " style="left:1790px;top:682.5px;color:#333;font-size:13px">GB</div>
<div class="t" style="left:1855.500px;top:687.500px;font-family:'Liberation Sans','Noto Sans CJK SC',sans-serif;font-weight:700;font-size:36.5px;line-height:40px;height:40px;letter-spacing:1.8px;color:#1a1a1a">1</div>
<div class="t " style="left:1877.5px;top:702.5px;color:#333;font-size:15px">个</div>
<div class="t" style="left:1953px;top:687.500px;font-family:'Liberation Sans','Noto Sans CJK SC',sans-serif;font-weight:700;font-size:36.5px;line-height:40px;height:40px;letter-spacing:1.8px;color:#e54545">0</div>
<div class="t " style="left:1976.5px;top:702.5px;color:#e54545;font-size:15px">个</div>
<div class="abs" style="left:1688px;top:748px;width:343px;height:1px;background:#e5e8ed"></div>
<div class="t b" style="left:1689px;top:769px;font-size:14px">推荐购买流量包</div>
<div class="t blue" style="right:182px;top:769px;">选购更多套餐包</div>
<svg class="abs" style="left:1710px;top:585px;z-index:5" width="30" height="58" viewBox="0 0 30 58"><path d="M8.400 4.100L17.200 33.400 24.200 31.600 18.800 53.300 4.900 34.800 12 36.700z" fill="#f0192c"/></svg>
<div class="abs ya" style="left:1688px;top:802px;width:343px;height:82px;border:1px solid #ffdcc4;background:linear-gradient(90deg,#ffece0,#fff2e8 60%,#fff4ec);overflow:hidden"><svg class="abs" style="left:220px;top:0" width="120" height="80" viewBox="0 0 120 80"><path d="M73.1 21.7L101.2 37.6L101.2 81L80 81L80 30L65 26.5z" fill="#fff2e8"/><path d="M73.1 21.7L74.5 20.8L105.6 38.8L105.6 81L101.2 81L101.2 37.6z" fill="#feeadd"/><path d="M58.6 19.5L87.2 35.8L87.2 81L65 81L65 30L45 27z" fill="#fff3ea"/><path d="M58.6 19.5L60 18.6L91.6 37L91.6 81L87.2 81L87.2 35.8z" fill="#feeadd"/><path d="M35.7 17.8L66.5 34.9L66.5 81L24.7 81L10.2 71L10.2 32.3z" fill="#fff4ec"/><path d="M35.7 17.8L37.1 16.9L70.9 36L70.9 81L66.5 81L66.5 34.9z" fill="#feeadd"/><path d="M35.700 17.800L10.200 32.300V71L24.700 81" fill="none" stroke="#fde9da" stroke-width="1"/></svg><div class="abs" style="left:21px;top:15px;font-size:16px;font-weight:350;line-height:24px;white-space:nowrap;color:#000;letter-spacing:.25px">境内 100GB<span style="display:inline-block;vertical-align:2px;margin-left:6px;font-weight:400;width:47px;height:16px;border-radius:7px 7px 7px 0;background:#ff7200;color:#fff;font-size:10px;line-height:15px;text-align:center;letter-spacing:-.3px">上次购买</span></div><div class="abs g" style="left:21px;top:42.800px;font-size:12px;font-weight:350;line-height:20px;white-space:nowrap">6个月 | 中国境内</div><div class="abs" style="right:37px;top:18px;white-space:nowrap;color:#ff7200;line-height:40px;font-size:28.700px;font-weight:700;letter-spacing:-.15px">20.00</div><div class="abs" style="left:307px;top:31.700px;white-space:nowrap;color:#ff7200;line-height:20px;font-size:14px">元</div></div>
<div class="abs ya" style="left:1688px;top:892px;width:343px;height:82px;border:1px solid #ffdcc4;background:linear-gradient(90deg,#ffece0,#fff2e8 60%,#fff4ec);overflow:hidden"><svg class="abs" style="left:220px;top:0" width="120" height="80" viewBox="0 0 120 80"><path d="M73.1 21.7L101.2 37.6L101.2 81L80 81L80 30L65 26.5z" fill="#fff2e8"/><path d="M73.1 21.7L74.5 20.8L105.6 38.8L105.6 81L101.2 81L101.2 37.6z" fill="#feeadd"/><path d="M58.6 19.5L87.2 35.8L87.2 81L65 81L65 30L45 27z" fill="#fff3ea"/><path d="M58.6 19.5L60 18.6L91.6 37L91.6 81L87.2 81L87.2 35.8z" fill="#feeadd"/><path d="M35.7 17.8L66.5 34.9L66.5 81L24.7 81L10.2 71L10.2 32.3z" fill="#fff4ec"/><path d="M35.7 17.8L37.1 16.9L70.9 36L70.9 81L66.5 81L66.5 34.9z" fill="#feeadd"/><path d="M35.700 17.800L10.200 32.300V71L24.700 81" fill="none" stroke="#fde9da" stroke-width="1"/></svg><div class="abs" style="left:21px;top:15px;font-size:16px;font-weight:350;line-height:24px;white-space:nowrap;color:#000;letter-spacing:.25px">境内 100GB</div><div class="abs g" style="left:21px;top:42.800px;font-size:12px;font-weight:350;line-height:20px;white-space:nowrap">12个月 | 中国境内</div><div class="abs" style="right:37px;top:18px;white-space:nowrap;color:#ff7200;line-height:40px;font-size:28.700px;font-weight:700;letter-spacing:-.15px">20.00</div><div class="abs" style="left:307px;top:31.700px;white-space:nowrap;color:#ff7200;line-height:20px;font-size:14px">元</div></div>
<div class="abs ya" style="left:1688px;top:982px;width:343px;height:82px;border:1px solid #ffdcc4;background:linear-gradient(90deg,#ffece0,#fff2e8 60%,#fff4ec);overflow:hidden"><svg class="abs" style="left:220px;top:0" width="120" height="80" viewBox="0 0 120 80"><path d="M73.1 21.7L101.2 37.6L101.2 81L80 81L80 30L65 26.5z" fill="#fff2e8"/><path d="M73.1 21.7L74.5 20.8L105.6 38.8L105.6 81L101.2 81L101.2 37.6z" fill="#feeadd"/><path d="M58.6 19.5L87.2 35.8L87.2 81L65 81L65 30L45 27z" fill="#fff3ea"/><path d="M58.6 19.5L60 18.6L91.6 37L91.6 81L87.2 81L87.2 35.8z" fill="#feeadd"/><path d="M35.7 17.8L66.5 34.9L66.5 81L24.7 81L10.2 71L10.2 32.3z" fill="#fff4ec"/><path d="M35.7 17.8L37.1 16.9L70.9 36L70.9 81L66.5 81L66.5 34.9z" fill="#feeadd"/><path d="M35.700 17.800L10.200 32.300V71L24.700 81" fill="none" stroke="#fde9da" stroke-width="1"/></svg><div class="abs" style="left:21px;top:15px;font-size:16px;font-weight:350;line-height:24px;white-space:nowrap;color:#000;letter-spacing:.25px">境内 1TB</div><div class="abs g" style="left:21px;top:42.800px;font-size:12px;font-weight:350;line-height:20px;white-space:nowrap">12个月 | 中国境内</div><div class="abs" style="right:37px;top:18px;white-space:nowrap;color:#ff7200;line-height:40px;font-size:28.700px;font-weight:700;letter-spacing:-.15px">194.00</div><div class="abs" style="left:307px;top:31.700px;white-space:nowrap;color:#ff7200;line-height:20px;font-size:14px">元</div></div>

</body>
</html>
